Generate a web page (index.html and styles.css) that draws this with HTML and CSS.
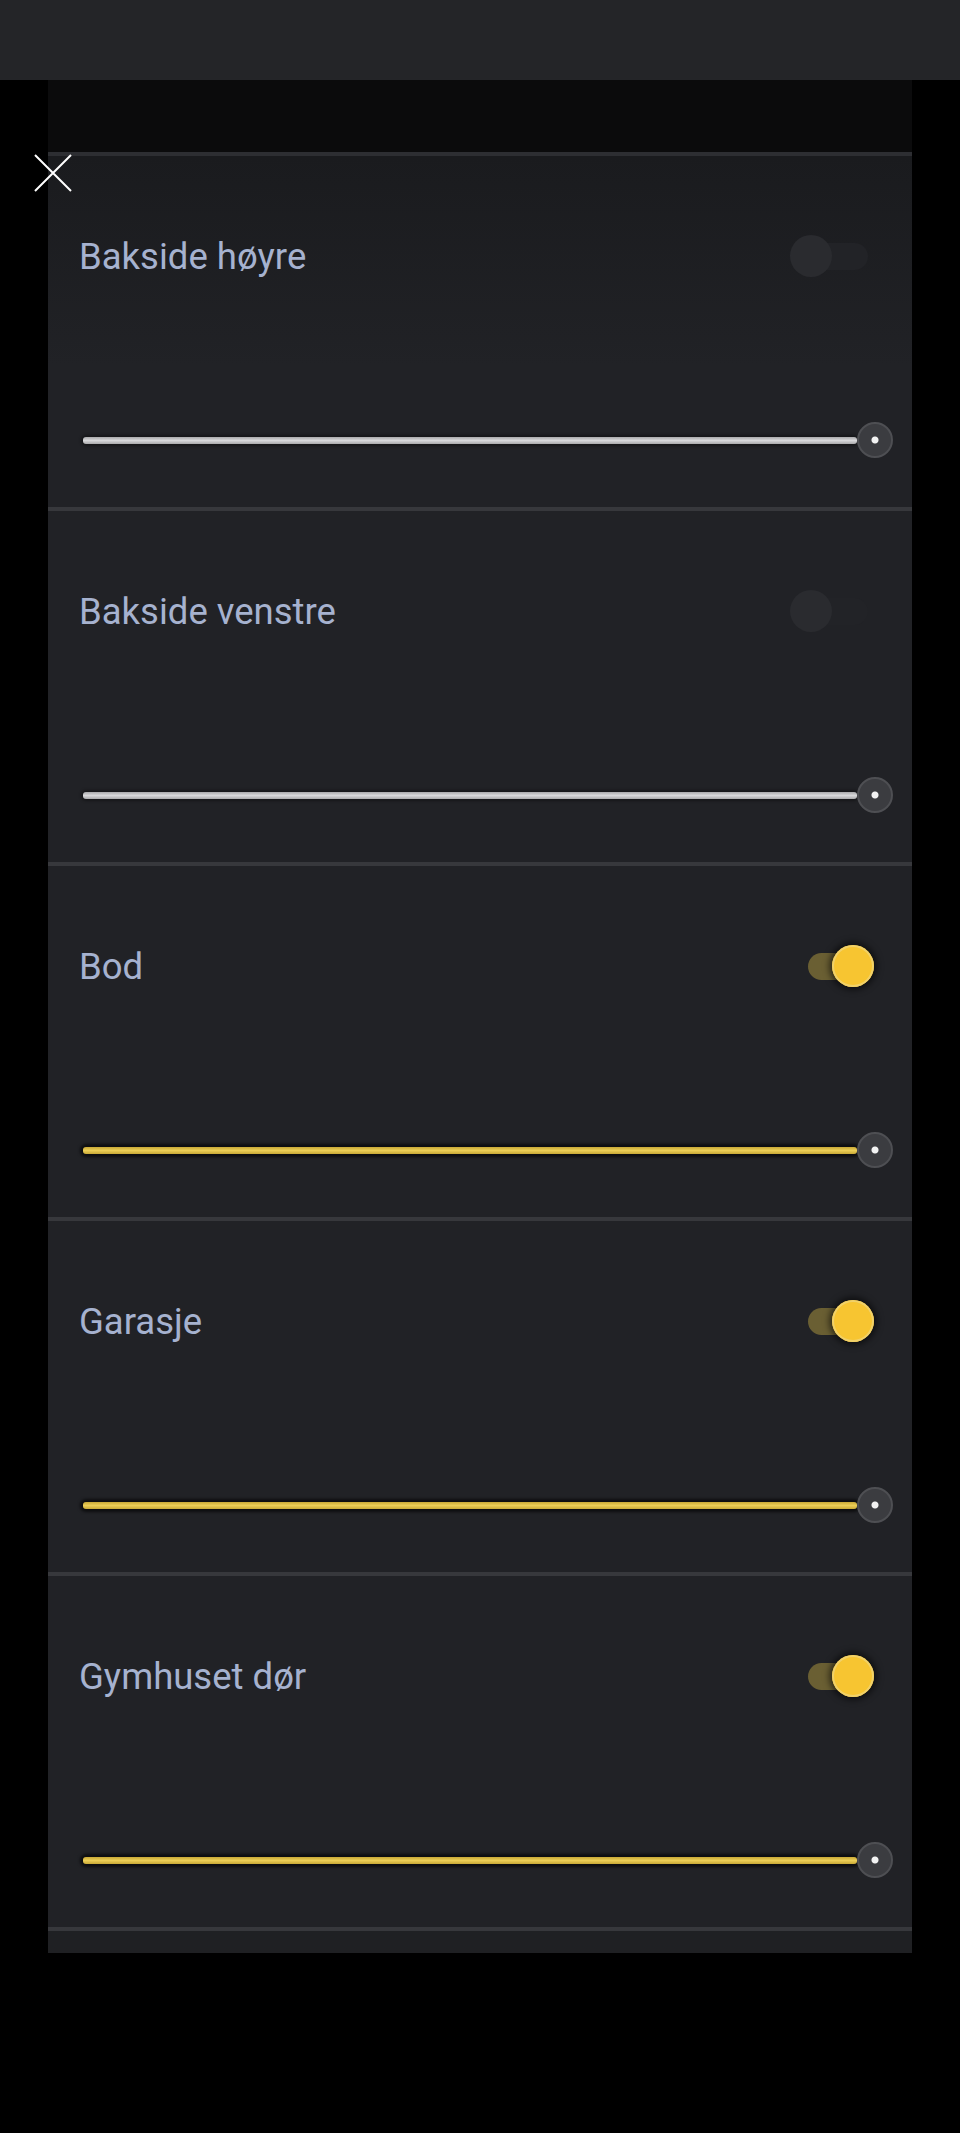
FILE: index.html
```html
<!DOCTYPE html>
<html>
<head>
	<title>Lys</title>
	<link rel="stylesheet" href="styles.css">
</head>
<body>
	<div class="topbar"></div>
	<div class="sheet">
		<div class="sheet-head"></div>

		<div class="row first">
			<div class="row-head">
				<span class="name">Bakside høyre</span>
				<div class="toggle"><span class="track"></span><span class="knob"></span></div>
			</div>
			<div class="slider"><span class="bar"></span><span class="thumb"></span></div>
		</div>

		<div class="row">
			<div class="row-head">
				<span class="name">Bakside venstre</span>
				<div class="toggle"><span class="track"></span><span class="knob"></span></div>
			</div>
			<div class="slider"><span class="bar"></span><span class="thumb"></span></div>
		</div>

		<div class="row">
			<div class="row-head">
				<span class="name">Bod</span>
				<div class="toggle on"><span class="track"></span><span class="knob"></span></div>
			</div>
			<div class="slider on"><span class="bar"></span><span class="thumb"></span></div>
		</div>

		<div class="row">
			<div class="row-head">
				<span class="name">Garasje</span>
				<div class="toggle on"><span class="track"></span><span class="knob"></span></div>
			</div>
			<div class="slider on"><span class="bar"></span><span class="thumb"></span></div>
		</div>

		<div class="row">
			<div class="row-head">
				<span class="name">Gymhuset dør</span>
				<div class="toggle on"><span class="track"></span><span class="knob"></span></div>
			</div>
			<div class="slider on"><span class="bar"></span><span class="thumb"></span></div>
		</div>

		<div class="sheet-foot"></div>
	</div>

	<button class="close" aria-label="Lukk">
		<svg width="38" height="38" viewBox="0 0 38 38">
			<path d="M1 1 L37 37 M37 1 L1 37" stroke="#fff" stroke-width="2" fill="none"/>
		</svg>
	</button>
</body>
</html>
```

FILE: styles.css
```css
body {
	margin: 0;
	background: #000;
	font-family: Roboto, "Liberation Sans", sans-serif;
	height: 2133px;
}
.topbar {
	height: 80px;
	background-color: #242528;
}
.sheet {
	margin: 0 48px;
	background-color: #212226;
}
.sheet-head {
	height: 72px;
	background-color: #0b0b0c;
}
.row {
	height: 355px;
	box-sizing: border-box;
	border-top: 4px solid #37383c;
	padding-top: 78px;
	display: flex;
	flex-direction: column;
}
.row.first {
	border-top-color: #2d2e32;
	background: linear-gradient(#1a1b1e, #212226 60%);
}
.row-head {
	display: flex;
	align-items: center;
	justify-content: space-between;
	height: 44px;
	padding: 0 37px 0 31px;
}
.name {
	font-size: 36.5px;
	color: #a6b2cf;
}

/* switch */
.toggle {
	position: relative;
	width: 85px;
	height: 42px;
}
.toggle .track {
	position: absolute;
	left: 18px;
	top: 8px;
	width: 60px;
	height: 27px;
	border-radius: 14px;
	background-color: #222327;
}
.toggle .knob {
	position: absolute;
	left: 0;
	top: 0;
	width: 42px;
	height: 42px;
	border-radius: 50%;
	background-color: #2a2b2f;
}
.toggle.on .track {
	background-color: #6a5f33;
}
.toggle.on .knob {
	left: 42px;
	background-color: #f7c531;
	box-shadow: 0 0 0 2px #f1d169 inset, 0 0 6px 3px rgba(0,0,0,0.55);
}

/* slider */
.slider {
	display: flex;
	align-items: center;
	height: 36px;
	margin-top: 144px;
	padding: 0 19px 0 35px;
}
.bar {
	flex: 1;
	height: 7px;
	border-radius: 3px;
	background: linear-gradient(#a9a9ab, #d8d8da 50%, #a9a9ab);
	box-shadow: 0 0 3px 2px rgba(0,0,0,0.35);
}
.slider.on .bar {
	background: linear-gradient(#c9a936, #ecce56 50%, #c9a936);
	box-shadow: 0 0 3px 3px rgba(0,0,0,0.6);
}
.thumb {
	width: 36px;
	height: 36px;
	box-sizing: border-box;
	border-radius: 50%;
	border: 2px solid #4e4f53;
	background: radial-gradient(circle, #f2f2f2 0 3px, #3b3c40 4px);
}
.sheet-foot {
	height: 26px;
	box-sizing: border-box;
	border-top: 4px solid #37383c;
	background-color: #1f2023;
}

.close {
	position: absolute;
	left: 34px;
	top: 154px;
	padding: 0;
	border: 0;
	background: none;
	line-height: 0;
}
```
